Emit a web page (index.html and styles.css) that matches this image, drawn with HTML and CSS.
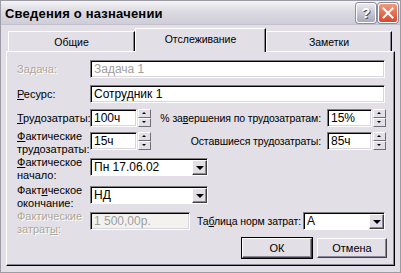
FILE: index.html
```html
<!DOCTYPE html>
<html lang="ru">
<head>
<meta charset="utf-8">
<title>Сведения о назначении</title>
<link rel="stylesheet" href="styles.css">
</head>
<body>
<div class="window">
  <div class="titlebar">
    <span class="title">Сведения о назначении</span>
    <div class="ctrls">
      <div class="tbtn help">?</div>
      <div class="tbtn close">
        <svg width="12" height="12" viewBox="0 0 12 12"><path d="M1.5 1.5L10.5 10.5M10.5 1.5L1.5 10.5" stroke="#fff" stroke-width="2" stroke-linecap="square"/></svg>
      </div>
    </div>
  </div>
  <div class="client">
    <div class="tabs">
      <div class="tab">Общие</div>
      <div class="tab active">Отслеживание</div>
      <div class="tab">Заметки</div>
    </div>
    <div class="panel">
      <div class="row r1">
        <label class="lbl disabled">Задача:</label>
        <div class="field wide disabled-text">Задача 1</div>
      </div>
      <div class="row r2">
        <label class="lbl"><u>Р</u>есурс:</label>
        <div class="field wide">Сотрудник 1</div>
      </div>
      <div class="row r3">
        <label class="lbl"><u>Т</u>рудозатраты:</label>
        <div class="spinbox">
          <div class="field num">100ч</div>
          <div class="spin"><span class="up"></span><span class="down"></span></div>
        </div>
        <label class="lbl right">% за<u>в</u>ершения по трудозатратам:</label>
        <div class="spinbox">
          <div class="field num2">15%</div>
          <div class="spin"><span class="up"></span><span class="down"></span></div>
        </div>
      </div>
      <div class="row r4">
        <label class="lbl two"><span class="ln"><u>Ф</u>актические</span><span class="ln">трудозатраты:</span></label>
        <div class="spinbox">
          <div class="field num">15ч</div>
          <div class="spin"><span class="up"></span><span class="down"></span></div>
        </div>
        <label class="lbl right">Оставшиеся трудозатраты:</label>
        <div class="spinbox">
          <div class="field num2">85ч</div>
          <div class="spin"><span class="up"></span><span class="down"></span></div>
        </div>
      </div>
      <div class="row r5">
        <label class="lbl two"><span class="ln"><u>Ф</u>актическое</span><span class="ln">начало:</span></label>
        <div class="combo mid">
          <div class="ctext">Пн 17.06.02</div>
          <div class="dd"><span class="tri"></span></div>
        </div>
      </div>
      <div class="row r6">
        <label class="lbl two"><span class="ln">Факт<u>и</u>ческое</span><span class="ln">окончание:</span></label>
        <div class="combo mid">
          <div class="ctext">НД</div>
          <div class="dd"><span class="tri"></span></div>
        </div>
      </div>
      <div class="row r7">
        <label class="lbl two disabled"><span class="ln">Фактические</span><span class="ln">затрат<u>ы</u>:</span></label>
        <div class="field cost disabled-text">1 500,00р.</div>
        <label class="lbl table">Та<u>б</u>лица норм затрат:</label>
        <div class="combo small">
          <div class="ctext">A</div>
          <div class="dd"><span class="tri"></span></div>
        </div>
      </div>
      <div class="buttons">
        <div class="btn default">ОК</div>
        <div class="btn">Отмена</div>
      </div>
    </div>
  </div>
</div>
</body>
</html>
```
FILE: styles.css
```css
* { box-sizing: border-box; }
html, body { margin: 0; padding: 0; }
body {
  width: 401px;
  height: 273px;
  overflow: hidden;
  font-family: "Liberation Sans", Arial, sans-serif;
  font-size: 11px;
  color: #000;
  background: #e2dfe6;
}
.window {
  width: 401px;
  height: 273px;
  background: #e2dfe6;
  border: 1px solid #9c9ba6;
  display: flex;
  flex-direction: column;
}
.titlebar {
  height: 24px;
  flex: none;
  display: flex;
  align-items: center;
  justify-content: space-between;
  padding: 0 2px 0 4px;
  background: linear-gradient(#f4f4f6 0%, #dcdbe2 45%, #cfcdd8 100%);
  border-bottom: 1px solid #c2c0cc;
}
.title {
  font-weight: bold;
  font-size: 13px;
  letter-spacing: 0.2px;
  padding-top: 2px;
}
.ctrls { display: flex; gap: 2px; }
.tbtn {
  width: 20px;
  height: 20px;
  border-radius: 3px;
  display: flex;
  align-items: center;
  justify-content: center;
  border: 1px solid #fff;
  box-shadow: 0 0 0 1px #8d8c9c;
}
.help {
  background: linear-gradient(#e9e9ef, #a9a8b8);
  color: #fff;
  font-weight: bold;
  font-size: 14px;
  text-shadow: 1px 1px 0 #55546a;
}
.close {
  background: linear-gradient(#f29a7d, #d8472a);
}
.client {
  flex: 1;
  padding: 3px 3px 6px 5px;
  display: flex;
  flex-direction: column;
}
.tabs {
  display: flex;
  height: 23px;
  padding-left: 2px;
  align-items: flex-end;
  position: relative;
  z-index: 1;
}
.tab {
  height: 20px;
  display: flex;
  align-items: center;
  justify-content: center;
  border: 1px solid #fff;
  border-bottom: none;
  border-right: 1px solid #000;
  box-shadow: inset -1px 0 0 #8a8896;
  background: #e2dfe6;
  font-size: 10.5px;
}
.tab:nth-child(1) { width: 127px; }
.tab.active {
  width: 131px;
  height: 24px;
  margin-bottom: -1px;
  padding-bottom: 3px;
}
.tab:nth-child(3) { width: 126px; }
.panel {
  flex: 1;
  margin-right: 2px;
  border: 1px solid #fff;
  border-right-color: #000;
  border-bottom-color: #000;
  box-shadow: inset -1px -1px 0 #8a8896;
  padding: 7px 0 0 10px;
  display: flex;
  flex-direction: column;
}
.row { display: flex; align-items: flex-start; }
.r1 { height: 25px; margin-top: 1px; }
.r2 { height: 24px; }
.r3 { height: 23px; }
.r4 { height: 26px; }
.r5 { height: 28px; }
.r6 { height: 26px; }
.r7 { height: 26px; }
.lbl {
  width: 73px;
  flex: none;
  line-height: 18px;
  white-space: nowrap;
}
.lbl.two {
  display: flex;
  flex-direction: column;
  line-height: 13px;
  margin-top: -2px;
}
.ln { display: block; }
.lbl.right {
  width: 176px;
  text-align: right;
  padding-right: 6px;
  font-size: 10.5px;
  letter-spacing: -0.1px;
}
.lbl.table {
  width: 113px;
  padding-left: 7px;
  font-size: 10.5px;
  letter-spacing: -0.1px;
}
.disabled {
  color: #aca899;
  text-shadow: 1px 1px 0 #fff;
}
.field {
  height: 18px;
  background: #fff;
  border-top: 1px solid #7f7f7f;
  border-left: 1px solid #7f7f7f;
  border-right: 1px solid #fff;
  border-bottom: 1px solid #fff;
  box-shadow: inset 1px 1px 0 #000, inset -1px -1px 0 #d8d5dc;
  padding: 2px 0 0 3px;
  white-space: nowrap;
  overflow: hidden;
  font-size: 12px;
  line-height: 13px;
}
.wide { width: 295px; }
.disabled-text { color: #9e9e9e; }
.cost { width: 100px; background: #f3f2ef; }
.spinbox { display: flex; flex: none; }
.num { width: 47px; }
.num2 { width: 45px; }
.spin {
  width: 13px;
  height: 18px;
  display: flex;
  flex-direction: column;
  margin-left: 1px;
}
.spin span {
  flex: 1;
  background: #e2dfe6;
  border: 1px solid #fff;
  border-right-color: #6e6d78;
  border-bottom-color: #6e6d78;
  position: relative;
}
.spin span::after {
  content: "";
  position: absolute;
  left: 3px;
  top: 2px;
  border-left: 2px solid transparent;
  border-right: 2px solid transparent;
}
.spin .up::after { border-bottom: 2px solid #000; }
.spin .down::after { border-top: 2px solid #000; }
.combo {
  height: 18px;
  flex: none;
  display: flex;
  background: #fff;
  border-top: 1px solid #7f7f7f;
  border-left: 1px solid #7f7f7f;
  border-right: 1px solid #fff;
  border-bottom: 1px solid #fff;
  box-shadow: inset 1px 1px 0 #000;
}
.combo.mid { width: 118px; }
.combo.small { width: 82px; }
.ctext {
  flex: 1;
  padding: 2px 0 0 3px;
  font-size: 12px;
  line-height: 13px;
  white-space: nowrap;
}
.dd {
  width: 15px;
  margin: 1px 0 0 0;
  background: #e2dfe6;
  border: 1px solid #fff;
  border-right-color: #404040;
  border-bottom-color: #404040;
  box-shadow: inset -1px -1px 0 #8a8896;
  display: flex;
  align-items: center;
  justify-content: center;
}
.tri {
  border-left: 4px solid transparent;
  border-right: 4px solid transparent;
  border-top: 4px solid #000;
}
.buttons {
  display: flex;
  justify-content: flex-end;
  gap: 5px;
  padding-right: 7px;
}
.btn {
  width: 70px;
  height: 20px;
  display: flex;
  align-items: center;
  justify-content: center;
  border: 1px solid #fff;
  border-right-color: #404040;
  border-bottom-color: #404040;
  box-shadow: inset -1px -1px 0 #8a8896;
  background: #e2dfe6;
}
.btn.default {
  outline: 1px solid #000;
  outline-offset: 0;
}
```
